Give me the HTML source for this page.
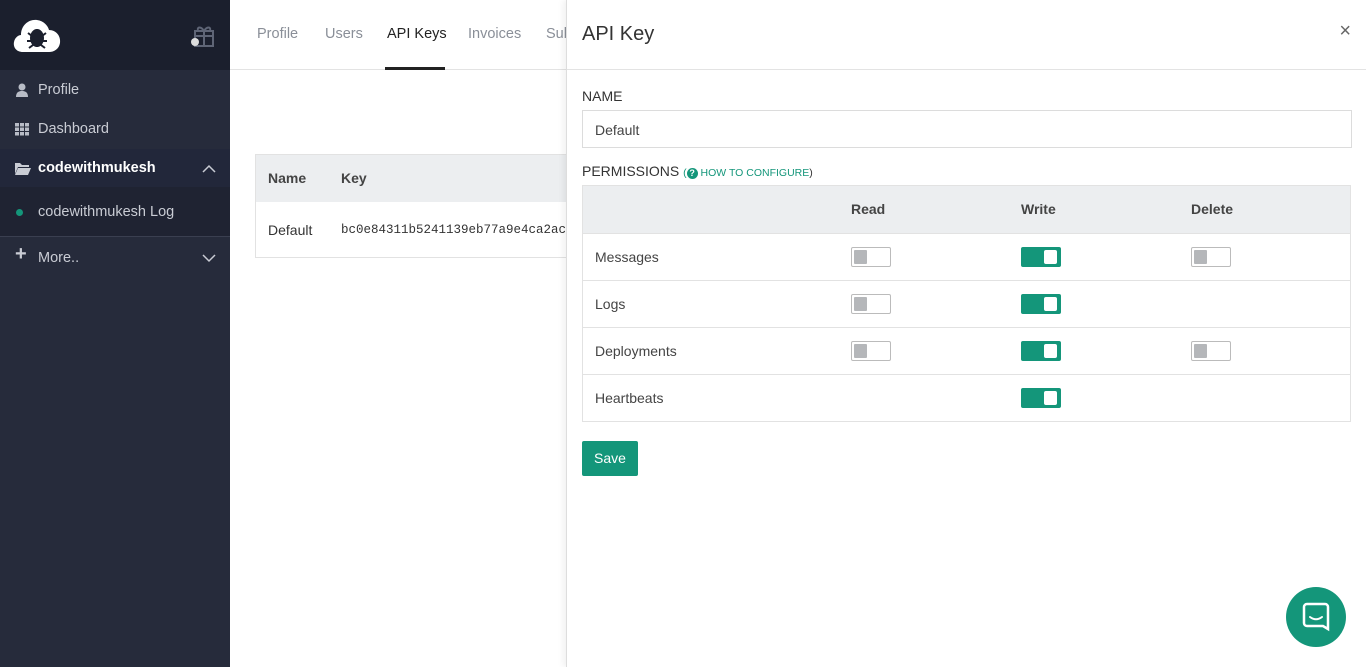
<!DOCTYPE html>
<html><head><style>
*{box-sizing:border-box;margin:0;padding:0}
body{width:1366px;height:667px;overflow:hidden;font-family:"Liberation Sans",sans-serif;background:#fff;position:relative;font-size:14px}
.sb{position:absolute;left:0;top:0;width:230px;height:667px;background:#262b3b;color:#c9ccd4}
.sbtop{height:70px;background:#1b1f2d;position:relative}
.item{position:absolute;left:0;width:230px;font-size:14.5px;display:flex;align-items:center}
.item .ic{position:absolute;left:15px}
.item span.t{position:absolute;left:38px}
.tabs{position:absolute;left:230px;top:0;right:0;height:70px;border-bottom:1px solid #e3e3e3}
.tab{position:absolute;top:26px;font-size:14.5px;color:#8a8f98}
.panel{position:absolute;left:566px;top:0;width:800px;height:667px;background:#fff;border-left:1px solid #ddd;box-shadow:-3px 0 6px rgba(0,0,0,.06)}
.lbl{position:absolute;left:15px;font-size:14px;color:#333}
.tbl{position:absolute;left:15px;top:185px;width:769px;border:1px solid #e2e2e2}
.row{height:47px;border-top:1px solid #e2e2e2;position:relative}
.hd{height:47px;background:#eceef0;position:relative;font-weight:bold;color:#444}
.c{position:absolute;top:15px}
.tg{position:absolute;top:13px;width:40px;height:20px;border-radius:2px}
.off{border:1px solid #bbb;background:#fff}
.off:after{content:"";position:absolute;left:2px;top:2px;width:13px;height:14px;background:#b5b7ba;border-radius:1px}
.on{background:#14967a}
.on:after{content:"";position:absolute;right:4px;top:3px;width:13px;height:14px;background:#fff;border-radius:2px}
</style></head><body>
<div class="sb">
 <div class="sbtop">
  <svg style="position:absolute;left:13px;top:17px" width="48" height="36" viewBox="0 0 48 36"><path d="M10 35C3 35 0 30 1 25 2 20 6 18 8 18 8 8 16 2 24 3 31 4 35 9 36 13 43 13 48 19 47 26 46 32 41 35 36 35Z" fill="#fff"/><ellipse cx="24" cy="21" rx="7" ry="9" fill="#1b1f2d"/><path d="M24 12v18M15 16l4 3M33 16l-4 3M14 24h6M34 24h-6M16 31l4-3M32 31l-4-3" stroke="#1b1f2d" stroke-width="2"/></svg>
  <svg style="position:absolute;left:189px;top:24px" width="28" height="24" viewBox="0 0 28 24"><rect x="6" y="7" width="18" height="15" fill="none" stroke="#5f6576" stroke-width="2"/><path d="M6 12h18M15 7v15M15 7c-3-5-7-4-6-1M15 7c3-5 7-4 6-1" stroke="#5f6576" stroke-width="2" fill="none"/><circle cx="6" cy="18" r="4" fill="#ddd"/></svg>
 </div>
 <div class="item" style="top:78px;height:24px"><svg class="ic" width="14" height="14" viewBox="0 0 14 14"><circle cx="7" cy="4" r="3.5" fill="#b8bcc6"/><path d="M1 14c0-5 3-6 6-6s6 1 6 6z" fill="#b8bcc6"/></svg><span class="t">Profile</span></div>
 <div class="item" style="top:117px;height:24px"><svg class="ic" width="14" height="14" viewBox="0 0 14 14" fill="#b8bcc6"><rect x="0" y="1" width="4" height="3.5"/><rect x="5" y="1" width="4" height="3.5"/><rect x="10" y="1" width="4" height="3.5"/><rect x="0" y="5.5" width="4" height="3.5"/><rect x="5" y="5.5" width="4" height="3.5"/><rect x="10" y="5.5" width="4" height="3.5"/><rect x="0" y="10" width="4" height="3.5"/><rect x="5" y="10" width="4" height="3.5"/><rect x="10" y="10" width="4" height="3.5"/></svg><span class="t">Dashboard</span></div>
 <div class="item" style="top:149px;height:38px;background:#22273a;color:#fff;font-weight:bold"><svg class="ic" width="16" height="13" viewBox="0 0 16 13"><path d="M0 1h5l2 2h7v2H3L0 12z M3 6h13l-3 7H0z" fill="#c9ccd4"/></svg><span class="t">codewithmukesh</span><svg style="position:absolute;left:202px" width="14" height="9" viewBox="0 0 14 9"><path d="M1 8l6-6 6 6" stroke="#c9ccd4" stroke-width="1.5" fill="none"/></svg></div>
 <div class="item" style="top:187px;height:50px;background:#1f2332"><span style="position:absolute;left:16px;width:7px;height:7px;border-radius:50%;background:#14967a"></span><span class="t">codewithmukesh Log</span></div>
 <div style="position:absolute;top:236px;left:0;width:230px;border-top:1px solid #3a3f50"></div>
 <div class="item" style="top:246px;height:24px"><span class="ic" style="font-size:20px;font-weight:bold;top:-3px">+</span><span class="t">More..</span><svg style="position:absolute;left:202px" width="14" height="9" viewBox="0 0 14 9"><path d="M1 1l6 6 6-6" stroke="#c9ccd4" stroke-width="1.5" fill="none"/></svg></div>
</div>
<div class="tabs">
 <span class="tab" style="left:27px">Profile</span>
 <span class="tab" style="left:95px">Users</span>
 <span class="tab" style="left:157px;color:#222">API Keys</span>
 <div style="position:absolute;left:155px;top:67px;width:60px;height:3px;background:#222"></div>
 <span class="tab" style="left:238px">Invoices</span>
 <span class="tab" style="left:316px">Sub</span>
</div>
<div style="position:absolute;left:255px;top:154px;width:320px;height:104px;border:1px solid #e2e2e2">
 <div style="height:47px;background:#eceef0;font-weight:bold;color:#444;position:relative"><span style="position:absolute;left:12px;top:15px">Name</span><span style="position:absolute;left:85px;top:15px">Key</span></div>
 <div style="position:relative;color:#333"><span style="position:absolute;left:12px;top:20px">Default</span><span style="position:absolute;left:85px;top:21px;font-family:'Liberation Mono',monospace;font-size:12.5px">bc0e84311b5241139eb77a9e4ca2ac</span></div>
</div>
<div class="panel">
 <div style="position:absolute;left:15px;top:23px;font-size:20px;color:#333">API Key</div>
 <div style="position:absolute;right:15px;top:20px;font-size:20px;color:#666">×</div>
 <div style="position:absolute;left:0;top:69px;width:800px;border-top:1px solid #e3e3e3"></div>
 <div class="lbl" style="top:88px">NAME</div>
 <div style="position:absolute;left:15px;top:110px;width:770px;height:38px;border:1px solid #dcdcdc;padding:11px 12px;color:#444">Default</div>
 <div class="lbl" style="top:163px">PERMISSIONS <span style="font-size:10.5px;color:#14967a">(<span style="display:inline-block;width:11px;height:11px;border-radius:50%;background:#14967a;color:#fff;font-size:9px;text-align:center;line-height:11px;font-weight:bold">?</span> HOW TO CONFIGURE<span style="color:#333">)</span></span></div>
 <div class="tbl">
  <div class="hd"><span class="c" style="left:268px">Read</span><span class="c" style="left:438px">Write</span><span class="c" style="left:608px">Delete</span></div>
  <div class="row"><span class="c" style="left:12px;color:#444">Messages</span><span class="tg off" style="left:268px"></span><span class="tg on" style="left:438px"></span><span class="tg off" style="left:608px"></span></div>
  <div class="row"><span class="c" style="left:12px;color:#444">Logs</span><span class="tg off" style="left:268px"></span><span class="tg on" style="left:438px"></span></div>
  <div class="row"><span class="c" style="left:12px;color:#444">Deployments</span><span class="tg off" style="left:268px"></span><span class="tg on" style="left:438px"></span><span class="tg off" style="left:608px"></span></div>
  <div class="row"><span class="c" style="left:12px;color:#444">Heartbeats</span><span class="tg on" style="left:438px"></span></div>
 </div>
 <div style="position:absolute;left:15px;top:441px;width:56px;height:35px;background:#14967a;color:#fff;border-radius:2px;text-align:center;line-height:35px">Save</div>
</div>
<div style="position:absolute;left:1286px;top:587px;width:60px;height:60px;border-radius:50%;background:#14967a">
 <svg style="position:absolute;left:16px;top:15px" width="28" height="30" viewBox="0 0 28 30"><path d="M5 2h18a3 3 0 0 1 3 3v22l-5-3H5a3 3 0 0 1-3-3V5a3 3 0 0 1 3-3z" fill="none" stroke="#fff" stroke-width="2.5"/><path d="M8 15c4 3 8 3 12 0" stroke="#fff" stroke-width="2" fill="none" stroke-linecap="round"/></svg>
</div>
</body></html>
